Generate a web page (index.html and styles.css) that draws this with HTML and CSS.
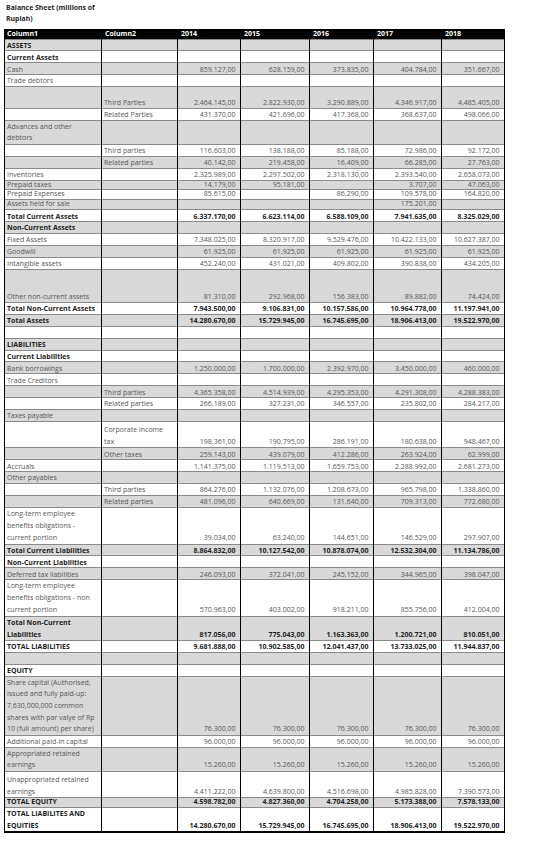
FILE: index.html
```html
<!DOCTYPE html>
<html>
<head>
<meta charset="utf-8">
<link rel="stylesheet" href="styles.css">
</head>
<body>
<div class="sheet">
<div class="title">Balance Sheet (millions of<br>Rupiah)</div>
<table class="bs">
<colgroup>
<col class="c1"><col class="c2"><col class="c3"><col class="c4"><col class="c5"><col class="c6"><col class="c7">
</colgroup>
<thead>
<tr><th>Column1</th><th>Column2</th><th>2014</th><th>2015</th><th>2016</th><th>2017</th><th>2018</th></tr>
</thead>
<tbody>
<tr class="b"><td>ASSETS</td><td></td><td></td><td></td><td></td><td></td><td></td></tr>
<tr class="b"><td>Current Assets</td><td></td><td></td><td></td><td></td><td></td><td></td></tr>
<tr><td>Cash</td><td></td><td class="n">859.127,00</td><td class="n">628.159,00</td><td class="n">373.835,00</td><td class="n">404.784,00</td><td class="n">351.667,00</td></tr>
<tr><td>Trade debtors</td><td></td><td></td><td></td><td></td><td></td><td></td></tr>
<tr class="d"><td></td><td>Third Parties</td><td class="n">2.464.145,00</td><td class="n">2.822.930,00</td><td class="n">3.290.889,00</td><td class="n">4.346.917,00</td><td class="n">4.485.405,00</td></tr>
<tr><td></td><td>Related Parties</td><td class="n">431.370,00</td><td class="n">421.696,00</td><td class="n">417.368,00</td><td class="n">368.637,00</td><td class="n">498.066,00</td></tr>
<tr class="m"><td>Advances and other<br>debtors</td><td></td><td></td><td></td><td></td><td></td><td></td></tr>
<tr><td></td><td>Third parties</td><td class="n">116.603,00</td><td class="n">138.188,00</td><td class="n">85.188,00</td><td class="n">72.986,00</td><td class="n">92.172,00</td></tr>
<tr><td></td><td>Related parties</td><td class="n">40.142,00</td><td class="n">219.458,00</td><td class="n">16.409,00</td><td class="n">66.285,00</td><td class="n">27.763,00</td></tr>
<tr><td>Inventories</td><td></td><td class="n">2.325.989,00</td><td class="n">2.297.502,00</td><td class="n">2.318.130,00</td><td class="n">2.393.540,00</td><td class="n">2.658.073,00</td></tr>
<tr class="s"><td>Prepaid taxes</td><td></td><td class="n">14.179,00</td><td class="n">95.181,00</td><td class="n"></td><td class="n">3.707,00</td><td class="n">47.063,00</td></tr>
<tr class="s"><td>Prepaid Expenses</td><td></td><td class="n">85.615,00</td><td class="n"></td><td class="n">86.290,00</td><td class="n">109.578,00</td><td class="n">164.820,00</td></tr>
<tr class="s"><td>Assets held for sale</td><td></td><td class="n"></td><td class="n"></td><td class="n"></td><td class="n">175.201,00</td><td class="n"></td></tr>
<tr class="b"><td>Total Current Assets</td><td></td><td class="n">6.337.170,00</td><td class="n">6.623.114,00</td><td class="n">6.588.109,00</td><td class="n">7.941.635,00</td><td class="n">8.325.029,00</td></tr>
<tr class="b"><td>Non-Current Assets</td><td></td><td></td><td></td><td></td><td></td><td></td></tr>
<tr><td>Fixed Assets</td><td></td><td class="n">7.348.025,00</td><td class="n">8.320.917,00</td><td class="n">9.529.476,00</td><td class="n">10.422.133,00</td><td class="n">10.627.387,00</td></tr>
<tr><td>Goodwill</td><td></td><td class="n">61.925,00</td><td class="n">61.925,00</td><td class="n">61.925,00</td><td class="n">61.925,00</td><td class="n">61.925,00</td></tr>
<tr><td>Intangible assets</td><td></td><td class="n">452.240,00</td><td class="n">431.021,00</td><td class="n">409.802,00</td><td class="n">390.838,00</td><td class="n">434.205,00</td></tr>
<tr class="t"><td>Other non-current assets</td><td></td><td class="n">81.310,00</td><td class="n">292.968,00</td><td class="n">156.383,00</td><td class="n">89.882,00</td><td class="n">74.424,00</td></tr>
<tr class="b"><td>Total Non-Current Assets</td><td></td><td class="n">7.943.500,00</td><td class="n">9.106.831,00</td><td class="n">10.157.586,00</td><td class="n">10.964.778,00</td><td class="n">11.197.941,00</td></tr>
<tr class="b"><td>Total Assets</td><td></td><td class="n">14.280.670,00</td><td class="n">15.729.945,00</td><td class="n">16.745.695,00</td><td class="n">18.906.413,00</td><td class="n">19.522.970,00</td></tr>
<tr><td></td><td></td><td></td><td></td><td></td><td></td><td></td></tr>
<tr class="b"><td>LIABILITIES</td><td></td><td></td><td></td><td></td><td></td><td></td></tr>
<tr class="b"><td>Current Liabilities</td><td></td><td></td><td></td><td></td><td></td><td></td></tr>
<tr><td>Bank borrowings</td><td></td><td class="n">1.250.000,00</td><td class="n">1.700.000,00</td><td class="n">2.392.970,00</td><td class="n">3.450.000,00</td><td class="n">460.000,00</td></tr>
<tr><td>Trade Creditors</td><td></td><td></td><td></td><td></td><td></td><td></td></tr>
<tr><td></td><td>Third parties</td><td class="n">4.365.358,00</td><td class="n">4.514.939,00</td><td class="n">4.295.353,00</td><td class="n">4.291.308,00</td><td class="n">4.288.383,00</td></tr>
<tr><td></td><td>Related parties</td><td class="n">266.189,00</td><td class="n">327.231,00</td><td class="n">346.557,00</td><td class="n">235.802,00</td><td class="n">284.217,00</td></tr>
<tr><td>Taxes payable</td><td></td><td></td><td></td><td></td><td></td><td></td></tr>
<tr class="m tall"><td></td><td>Corporate income<br>tax</td><td class="n">198.361,00</td><td class="n">190.795,00</td><td class="n">286.191,00</td><td class="n">180.638,00</td><td class="n">948.467,00</td></tr>
<tr><td></td><td>Other taxes</td><td class="n">259.143,00</td><td class="n">439.079,00</td><td class="n">412.286,00</td><td class="n">263.924,00</td><td class="n">62.999,00</td></tr>
<tr><td>Accruals</td><td></td><td class="n">1.141.375,00</td><td class="n">1.119.513,00</td><td class="n">1.659.753,00</td><td class="n">2.288.992,00</td><td class="n">2.681.273,00</td></tr>
<tr><td>Other payables</td><td></td><td></td><td></td><td></td><td></td><td></td></tr>
<tr><td></td><td>Third parties</td><td class="n">864.276,00</td><td class="n">1.132.076,00</td><td class="n">1.208.673,00</td><td class="n">965.798,00</td><td class="n">1.338.860,00</td></tr>
<tr><td></td><td>Related parties</td><td class="n">481.096,00</td><td class="n">640.669,00</td><td class="n">131.640,00</td><td class="n">709.313,00</td><td class="n">772.680,00</td></tr>
<tr class="m w"><td>Long-term employee<br>benefits obligations -<br>current portion</td><td></td><td class="n">39.034,00</td><td class="n">63.240,00</td><td class="n">144.651,00</td><td class="n">146.529,00</td><td class="n">297.907,00</td></tr>
<tr class="b"><td>Total Current Liabilities</td><td></td><td class="n">8.864.832,00</td><td class="n">10.127.542,00</td><td class="n">10.878.074,00</td><td class="n">12.532.304,00</td><td class="n">11.134.786,00</td></tr>
<tr class="b"><td>Non-Current Liabilities</td><td></td><td></td><td></td><td></td><td></td><td></td></tr>
<tr><td>Deferred tax liabilities</td><td></td><td class="n">246.093,00</td><td class="n">372.041,00</td><td class="n">245.152,00</td><td class="n">344.965,00</td><td class="n">398.047,00</td></tr>
<tr class="m w"><td>Long-term employee<br>benefits obligations - non<br>current portion</td><td></td><td class="n">570.963,00</td><td class="n">403.002,00</td><td class="n">918.211,00</td><td class="n">855.756,00</td><td class="n">412.004,00</td></tr>
<tr class="b m"><td>Total Non-Current<br>Liabilities</td><td></td><td class="n">817.056,00</td><td class="n">775.043,00</td><td class="n">1.163.363,00</td><td class="n">1.200.721,00</td><td class="n">810.051,00</td></tr>
<tr class="b"><td>TOTAL LIABILITIES</td><td></td><td class="n">9.681.888,00</td><td class="n">10.902.585,00</td><td class="n">12.041.437,00</td><td class="n">13.733.025,00</td><td class="n">11.944.837,00</td></tr>
<tr><td></td><td></td><td></td><td></td><td></td><td></td><td></td></tr>
<tr class="b"><td>EQUITY</td><td></td><td></td><td></td><td></td><td></td><td></td></tr>
<tr class="m"><td>Share capital (Authorised,<br>issued and fully paid-up:<br>7,630,000,000 common<br>shares with par valye of Rp<br>10 (full amount) per share)</td><td></td><td class="n">76.300,00</td><td class="n">76.300,00</td><td class="n">76.300,00</td><td class="n">76.300,00</td><td class="n">76.300,00</td></tr>
<tr><td>Additional paid-in capital</td><td></td><td class="n">96.000,00</td><td class="n">96.000,00</td><td class="n">96.000,00</td><td class="n">96.000,00</td><td class="n">96.000,00</td></tr>
<tr class="m"><td>Appropriated retained<br>earnings</td><td></td><td class="n">15.260,00</td><td class="n">15.260,00</td><td class="n">15.260,00</td><td class="n">15.260,00</td><td class="n">15.260,00</td></tr>
<tr class="m tall"><td>Unappropriated retained<br>earnings</td><td></td><td class="n">4.411.222,00</td><td class="n">4.639.800,00</td><td class="n">4.516.698,00</td><td class="n">4.985.828,00</td><td class="n">7.390.573,00</td></tr>
<tr class="b s"><td>TOTAL EQUITY</td><td></td><td class="n">4.598.782,00</td><td class="n">4.827.360,00</td><td class="n">4.704.258,00</td><td class="n">5.173.388,00</td><td class="n">7.578.133,00</td></tr>
<tr class="b m last"><td>TOTAL LIABILITES AND<br>EQUITIES</td><td></td><td class="n">14.280.670,00</td><td class="n">15.729.945,00</td><td class="n">16.745.695,00</td><td class="n">18.906.413,00</td><td class="n">19.522.970,00</td></tr>
</tbody>
</table>
</div>
</body>
</html>
```

FILE: styles.css
```css
html, body {
  margin: 0;
  padding: 0;
  background: #ffffff;
}

body {
  font-family: "Open Sans", "Liberation Sans", sans-serif;
  font-size: 7px;
  color: #575757;
}

.sheet {
  padding-left: 4px;
}

.title {
  width: 97px;
  height: 29px;
  box-sizing: border-box;
  padding: 3px 0 0 2px;
  font-weight: 700;
  font-size: 6.9px;
  line-height: 10.5px;
  color: #262626;
}

.bs {
  border-collapse: collapse;
  table-layout: fixed;
  width: 500px;
  border: 1px solid #000;
}

.c1 { width: 97px; }
.c2 { width: 76px; }
.c3 { width: 63px; }
.c4 { width: 69px; }
.c5 { width: 64px; }
.c6 { width: 68px; }
.c7 { width: 63px; }

.bs th {
  background: #000;
  color: #fff;
  font-weight: 700;
  text-align: left;
  line-height: 8.5px;
  padding: 0 2px 0 3px;
  border-left: 1px solid #000;
  white-space: nowrap;
}

.bs th:first-child {
  padding-left: 2px;
}

.bs td {
  box-sizing: border-box;
  height: 11.9px;
  padding: 1.3px 4px 0 2px;
  line-height: 9.6px;
  vertical-align: bottom;
  white-space: nowrap;
  overflow: hidden;
  border-left: 1px solid #000;
  border-right: 1px solid #000;
  border-top: 1px solid #8a8a8a;
}

.bs td.n {
  text-align: right;
  padding-right: 4.5px;
}

.bs tbody tr:nth-child(odd) {
  background: #d9d9d9;
}

.bs tr.b td {
  font-weight: 700;
  color: #1e1e1e;
}

.bs tr.m td {
  line-height: 11.6px;
  padding-top: 0;
}

.bs tr.w td {
  line-height: 11.9px;
}

.bs tr.tall td {
  height: 26.5px;
}

.bs tr.d td {
  height: 21.7px;
}

.bs tr.t td {
  height: 33.3px;
}

.bs tr.s td {
  height: 9.9px;
  padding-top: 0;
  line-height: 8.9px;
}

.bs tr.last td {
  border-bottom: 2px solid #000;
}
```
